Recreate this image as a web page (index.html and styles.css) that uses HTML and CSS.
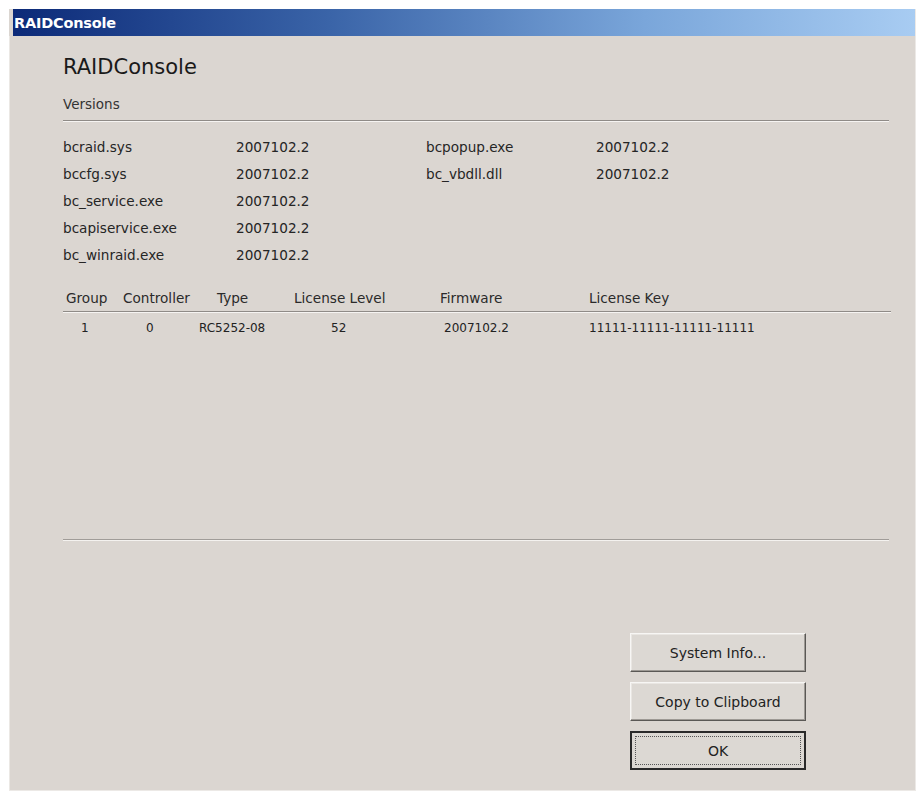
FILE: index.html
```html
<!DOCTYPE html>
<html lang="en">
<head>
<meta charset="utf-8">
<title>RAIDConsole</title>
<link rel="stylesheet" href="styles.css">
</head>
<body>
<div class="window">
  <div class="titlebar">RAIDConsole</div>
  <div class="client">
    <h1 class="app-name">RAIDConsole</h1>
    <div class="section-label">Versions</div>
    <div class="rule"></div>

    <div class="versions">
      <span>bcraid.sys</span><span>2007102.2</span><span>bcpopup.exe</span><span>2007102.2</span>
      <span>bccfg.sys</span><span>2007102.2</span><span>bc_vbdll.dll</span><span>2007102.2</span>
      <span>bc_service.exe</span><span>2007102.2</span><span></span><span></span>
      <span>bcapiservice.exe</span><span>2007102.2</span><span></span><span></span>
      <span>bc_winraid.exe</span><span>2007102.2</span><span></span><span></span>
    </div>

    <div class="grid head">
      <span class="c1">Group</span>
      <span class="c2">Controller</span>
      <span class="c3">Type</span>
      <span class="c4">License Level</span>
      <span class="c5">Firmware</span>
      <span class="c6">License Key</span>
    </div>
    <div class="rule table-rule"></div>
    <div class="grid row">
      <span class="c1">1</span>
      <span class="c2">0</span>
      <span class="c3">RC5252-08</span>
      <span class="c4">52</span>
      <span class="c5">2007102.2</span>
      <span class="c6">11111-11111-11111-11111</span>
    </div>

    <div class="spacer"></div>
    <div class="etched"></div>

    <div class="buttons">
      <button class="btn" type="button">System Info...</button>
      <button class="btn" type="button">Copy to Clipboard</button>
      <button class="btn default" type="button"><span class="focus">OK</span></button>
    </div>
  </div>
</div>
</body>
</html>
```

FILE: styles.css
```css
html, body {
  margin: 0;
  padding: 0;
  background: #ffffff;
}

body {
  font-family: "DejaVu Sans", Tahoma, sans-serif;
  color: #1e1e1e;
  padding: 9px 2px 3px 9px;
  height: 793px;
  box-sizing: border-box;
}

.window {
  height: 100%;
  display: flex;
  flex-direction: column;
  background: #dbd6d1;
  border-right: 1px solid #ece9e6;
  border-bottom: 1px solid #ece9e6;
}

.titlebar {
  height: 27px;
  flex: none;
  display: flex;
  align-items: center;
  padding-left: 1px;
  margin-left: 4px;
  font-weight: bold;
  font-size: 14.5px;
  letter-spacing: -0.2px;
  color: #ffffff;
  background: linear-gradient(to right, #0c2a78 0%, #3a64a8 35%, #7aa6da 70%, #a8ccf2 100%);
}

.client {
  flex: 1;
  display: flex;
  flex-direction: column;
  padding: 0 26px 20px 53px;
  border-left: 1px solid #ebe8e4;
}

.app-name {
  margin: 19px 0 0 0;
  font-weight: normal;
  font-size: 21px;
  line-height: 24px;
  color: #1a1a1a;
}

.section-label {
  margin-top: 17px;
  font-size: 13.5px;
  line-height: 16px;
  color: #333;
}

.rule {
  margin-top: 8px;
  height: 1px;
  background: #8f8b87;
  border-bottom: 1px solid #f6f4f2;
}

.versions {
  margin-top: 15px;
  display: grid;
  grid-template-columns: 173px 190px 170px 1fr;
  grid-auto-rows: 27px;
  font-size: 13.6px;
  line-height: 20px;
  color: #252525;
}

.grid {
  display: grid;
  grid-template-columns: 57px 77px 88px 146px 149px 1fr;
}

.head {
  margin-top: 17px;
  font-size: 13.6px;
  line-height: 18px;
  color: #2a2a2a;
}

.table-rule {
  margin-top: 4px;
  margin-right: -2px;
}

.row {
  margin-top: 6px;
  font-size: 12px;
  line-height: 18px;
  color: #222;
}

.head .c1 { padding-left: 3px; }
.head .c2 { padding-left: 3px; }
.head .c3 { padding-left: 20px; }
.head .c4 { padding-left: 9px; }
.head .c5 { padding-left: 9px; }
.head .c6 { padding-left: 9px; }

.row .c1 { padding-left: 18px; }
.row .c2 { padding-left: 26px; }
.row .c3 { padding-left: 2px; }
.row .c4 { padding-left: 46px; }
.row .c5 { padding-left: 13px; }
.row .c6 { padding-left: 9px; }

.spacer {
  flex: 1;
}

.etched {
  height: 1px;
  background: #a09c98;
  border-bottom: 1px solid #f4f2ef;
  margin-bottom: 92px;
}

.buttons {
  display: flex;
  flex-direction: column;
  align-items: flex-end;
  gap: 10px;
  padding-right: 83px;
}

.btn {
  width: 176px;
  height: 39px;
  font-family: "DejaVu Sans", Tahoma, sans-serif;
  font-size: 14px;
  color: #222;
  background: #dcd8d3;
  border: 1px solid;
  border-color: #f7f6f4 #5a5855 #5a5855 #f7f6f4;
  box-shadow: inset -1px -1px 0 #9d9994, inset 1px 1px 0 #e9e6e2;
  padding: 0;
  display: flex;
  align-items: center;
  justify-content: center;
}

.btn.default {
  border: 2px solid #2a2a2a;
  box-shadow: none;
  padding: 3px;
}

.focus {
  flex: 1;
  align-self: stretch;
  display: flex;
  align-items: center;
  justify-content: center;
  border: 1px dotted #555;
}
```
